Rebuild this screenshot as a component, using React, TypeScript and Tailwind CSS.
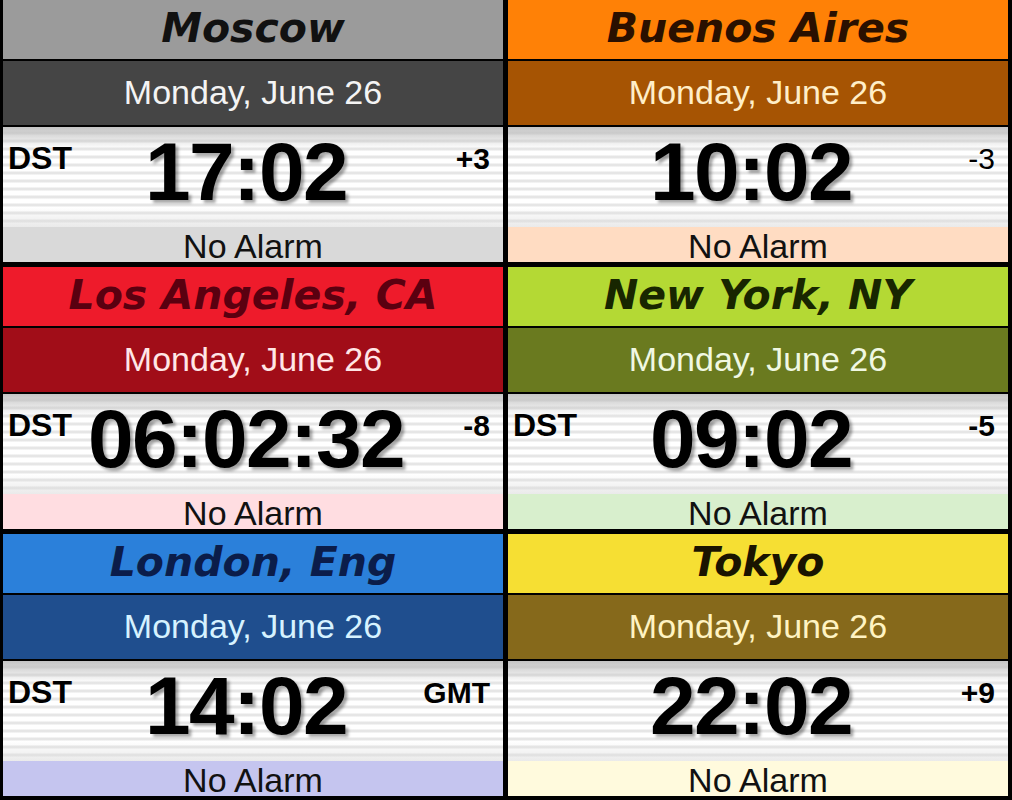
import React from 'react';

type Clock = {
  city: string;
  time: string;
  dst: boolean;
  offset: string;
  offsetBold: boolean;
  titleBg: string;
  titleText: string;
  dateBg: string;
  dateText: string;
  alarmBg: string;
};

const clocks: Clock[] = [
  {
    city: 'Moscow',
    time: '17:02',
    dst: true,
    offset: '+3',
    offsetBold: true,
    titleBg: 'bg-[#9b9b9b]',
    titleText: 'text-[#111111]',
    dateBg: 'bg-[#454545]',
    dateText: 'text-[#f4f4f4]',
    alarmBg: 'bg-[#d9d9d9]',
  },
  {
    city: 'Buenos Aires',
    time: '10:02',
    dst: false,
    offset: '-3',
    offsetBold: false,
    titleBg: 'bg-[#ff8106]',
    titleText: 'text-[#2a1000]',
    dateBg: 'bg-[#a65403]',
    dateText: 'text-[#ffeec8]',
    alarmBg: 'bg-[#ffdcc2]',
  },
  {
    city: 'Los Angeles, CA',
    time: '06:02:32',
    dst: true,
    offset: '-8',
    offsetBold: true,
    titleBg: 'bg-[#ee1b2b]',
    titleText: 'text-[#5a0010]',
    dateBg: 'bg-[#a10d18]',
    dateText: 'text-[#ffe6e6]',
    alarmBg: 'bg-[#ffdde1]',
  },
  {
    city: 'New York, NY',
    time: '09:02',
    dst: true,
    offset: '-5',
    offsetBold: true,
    titleBg: 'bg-[#b4d934]',
    titleText: 'text-[#182600]',
    dateBg: 'bg-[#6a7a1f]',
    dateText: 'text-[#f0f8e2]',
    alarmBg: 'bg-[#d8efcd]',
  },
  {
    city: 'London, Eng',
    time: '14:02',
    dst: true,
    offset: 'GMT',
    offsetBold: true,
    titleBg: 'bg-[#2b80da]',
    titleText: 'text-[#0b1d4a]',
    dateBg: 'bg-[#1f4e8e]',
    dateText: 'text-[#d6f2ff]',
    alarmBg: 'bg-[#c5c5ef]',
  },
  {
    city: 'Tokyo',
    time: '22:02',
    dst: false,
    offset: '+9',
    offsetBold: true,
    titleBg: 'bg-[#f6df33]',
    titleText: 'text-[#1a1400]',
    dateBg: 'bg-[#86691b]',
    dateText: 'text-[#fff3c2]',
    alarmBg: 'bg-[#fffadd]',
  },
];

function ClockCard({ c }: { c: Clock }) {
  return (
    <div className="flex h-[262px] flex-col">
      <div
        className={`flex h-[59px] items-center justify-center pb-[3px] font-['DejaVu_Sans',sans-serif] text-[41px] font-bold italic leading-none ${c.titleBg} ${c.titleText}`}
      >
        {c.city}
      </div>
      <div className="h-[2px] bg-black" />
      <div
        className={`flex h-[64px] items-center justify-center pb-[2px] font-['Liberation_Sans',Arial,sans-serif] text-[34px] leading-none ${c.dateBg} ${c.dateText}`}
      >
        Monday, June 26
      </div>
      <div className="h-[2px] bg-black" />
      <div className="grid h-[100px] grid-cols-[1fr_auto_1fr] items-start bg-[linear-gradient(to_bottom,rgba(190,190,190,0.9)_0px,rgba(255,255,255,0)_22px),linear-gradient(to_bottom,rgba(255,255,255,0)_80px,rgba(220,220,220,0.6)_100px),repeating-linear-gradient(to_bottom,#ffffff_0px,#ffffff_4px,#e6e6e6_5px,#e6e6e6_7px,#ffffff_8px)] font-['Liberation_Sans',Arial,sans-serif] text-black">
        <div className="pl-[5px] pt-[15px] text-[32px] font-bold leading-none">
          {c.dst ? 'DST' : ''}
        </div>
        <div className="mr-[14px] pt-[4px] text-[82px] font-bold leading-none tracking-[-1.5px] [text-shadow:3px_3px_3px_rgba(0,0,0,0.35)]">
          {c.time}
        </div>
        <div
          className={`pr-[13px] pt-[17px] text-right text-[30px] leading-none ${c.offsetBold ? 'font-bold' : 'font-normal'}`}
        >
          {c.offset}
        </div>
      </div>
      <div
        className={`h-[35px] pt-[4px] text-center font-['Liberation_Sans',Arial,sans-serif] text-[34px] leading-[30px] text-[#111111] ${c.alarmBg}`}
      >
        No Alarm
      </div>
    </div>
  );
}

export default function App() {
  return (
    <div className="min-h-[800px] bg-black pl-[3px] pr-[4px]">
      <div className="grid grid-cols-2 gap-[5px]">
        {clocks.map((c) => (
          <ClockCard key={c.city} c={c} />
        ))}
      </div>
    </div>
  );
}
